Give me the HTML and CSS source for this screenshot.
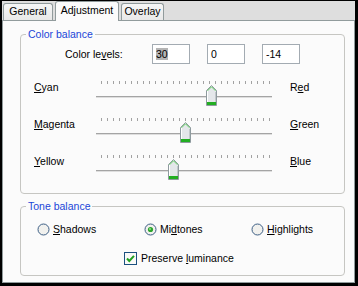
FILE: index.html
```html
<!DOCTYPE html>
<html lang="en">
<head>
    <meta charset="UTF-8">
    <title>Adjustment</title>
    <link rel="stylesheet" href="styles.css">
</head>
<body>
    <div class="window">
        <!-- tabs -->
        <div class="tabs">
            <div class="tab tab-general">General</div>
            <div class="tab tab-adjust active">Adjustment</div>
            <div class="tab tab-overlay">Overlay</div>
        </div>

        <div class="panel">
            <!-- color balance -->
            <fieldset class="group color-group">
                <legend>Color balance</legend>
                <div class="levels">
                    <span class="levels-label">Color le<u>v</u>els:</span>
                    <div class="field"><span class="sel">30</span></div>
                    <div class="field">0</div>
                    <div class="field">-14</div>
                </div>

                <div class="sliders">
                    <div class="slider-row">
                        <span class="lbl"><u>C</u>yan</span>
                        <div class="slider">
                            <div class="ticks"></div>
                            <div class="track"></div>
                            <svg class="thumb" style="left:110px" width="11" height="21" viewBox="0 0 11 21">
                                <path d="M5.5 0.5 L10.5 5.5 V20.5 H0.5 V5.5 Z" fill="#e4e7ea" stroke="#8e9a9e"/>
                                <path d="M1.5 5.8 L5.5 1.8 L9.5 5.8" fill="none" stroke="#63cf63"/>
                                <path d="M1.5 6 V17" stroke="#fff"/>
                                <path d="M9.5 7 V17" stroke="#c2c7cb"/>
                                <rect x="1" y="17" width="9" height="3" fill="#22ae22"/>
                            </svg>
                        </div>
                        <span class="lbl right">R<u>e</u>d</span>
                    </div>

                    <div class="slider-row">
                        <span class="lbl"><u>M</u>agenta</span>
                        <div class="slider">
                            <div class="ticks"></div>
                            <div class="track"></div>
                            <svg class="thumb" style="left:84px" width="11" height="21" viewBox="0 0 11 21">
                                <path d="M5.5 0.5 L10.5 5.5 V20.5 H0.5 V5.5 Z" fill="#e4e7ea" stroke="#8e9a9e"/>
                                <path d="M1.5 5.8 L5.5 1.8 L9.5 5.8" fill="none" stroke="#63cf63"/>
                                <path d="M1.5 6 V17" stroke="#fff"/>
                                <path d="M9.5 7 V17" stroke="#c2c7cb"/>
                                <rect x="1" y="17" width="9" height="3" fill="#22ae22"/>
                            </svg>
                        </div>
                        <span class="lbl right"><u>G</u>reen</span>
                    </div>

                    <div class="slider-row">
                        <span class="lbl"><u>Y</u>ellow</span>
                        <div class="slider">
                            <div class="ticks"></div>
                            <div class="track"></div>
                            <svg class="thumb" style="left:72px" width="11" height="21" viewBox="0 0 11 21">
                                <path d="M5.5 0.5 L10.5 5.5 V20.5 H0.5 V5.5 Z" fill="#e4e7ea" stroke="#8e9a9e"/>
                                <path d="M1.5 5.8 L5.5 1.8 L9.5 5.8" fill="none" stroke="#63cf63"/>
                                <path d="M1.5 6 V17" stroke="#fff"/>
                                <path d="M9.5 7 V17" stroke="#c2c7cb"/>
                                <rect x="1" y="17" width="9" height="3" fill="#22ae22"/>
                            </svg>
                        </div>
                        <span class="lbl right"><u>B</u>lue</span>
                    </div>
                </div>
            </fieldset>

            <!-- tone balance -->
            <fieldset class="group tone-group">
                <legend>Tone balance</legend>
                <div class="radios">
                    <div class="opt">
                        <svg width="13" height="13" viewBox="0 0 13 13">
                            <circle cx="6.5" cy="6.5" r="5.5" fill="#f1f1ee" stroke="#3d5f85"/>
                        </svg>
                        <span><u>S</u>hadows</span>
                    </div>
                    <div class="opt">
                        <svg width="13" height="13" viewBox="0 0 13 13">
                            <circle cx="6.5" cy="6.5" r="5.5" fill="#f1f1ee" stroke="#3d5f85"/>
                            <circle cx="6.5" cy="6.5" r="2.6" fill="#2ca52c"/>
                            <circle cx="6" cy="6" r="1" fill="#8ee08e"/>
                        </svg>
                        <span>Mi<u>d</u>tones</span>
                    </div>
                    <div class="opt">
                        <svg width="13" height="13" viewBox="0 0 13 13">
                            <circle cx="6.5" cy="6.5" r="5.5" fill="#f1f1ee" stroke="#3d5f85"/>
                        </svg>
                        <span><u>H</u>ighlights</span>
                    </div>
                </div>
                <div class="check">
                    <svg width="13" height="13" viewBox="0 0 13 13">
                        <rect x="0.5" y="0.5" width="12" height="12" fill="#fafaf8" stroke="#1c5180"/>
                        <path d="M3 6.5 L5.3 9 L10 3.8" fill="none" stroke="#21a121" stroke-width="2"/>
                    </svg>
                    <span>Preserve <u>l</u>uminance</span>
                </div>
            </fieldset>
        </div>
    </div>
</body>
</html>
```

FILE: styles.css
```css
body {
    margin: 0;
    background-color: #000;
    font-family: "Liberation Sans", Arial, sans-serif;
    font-size: 10.5px;
    color: #000;
}

/* window */
.window {
    margin: 1px 0 0 2px;
    width: 353px;
    height: 282px;
    background-color: #dedede;
    display: flex;
    flex-direction: column;
}

/* tabs */
.tabs {
    height: 19px;
    display: flex;
    align-items: flex-end;
    position: relative;
    z-index: 1;
}

.tab {
    box-sizing: border-box;
    height: 17px;
    line-height: 15px;
    text-align: center;
    border: 1px solid #919b9c;
    border-bottom: none;
    border-radius: 3px 3px 0 0;
    background: linear-gradient(#f6f6f6, #e8e8e8);
}

.tab-general {
    width: 50px;
    margin-left: 1px;
}

.tab-adjust {
    width: 64px;
    margin-left: 2px;
}

.tab-overlay {
    width: 43px;
    margin-left: 2px;
}

.tab.active {
    height: 20px;
    line-height: 17px;
    margin-bottom: -1px;
    background: #fbfbfb;
}

/* panel */
.panel {
    flex: 1;
    border: 1px solid #919b9c;
    background-color: #fbfbfb;
}

.group {
    box-sizing: border-box;
    width: 325px;
    min-width: 0;
    margin: 0 0 0 17px;
    padding: 0;
    border: 1px solid #c6c6c2;
    border-radius: 4px;
}

.group legend {
    margin-left: 5px;
    padding: 0 2px;
    line-height: 13px;
    color: #2146d8;
}

.color-group {
    margin-top: 7px;
    padding-bottom: 1px;
}

.tone-group {
    margin-top: 6px;
    padding-bottom: 10px;
}

/* color levels */
.levels {
    display: flex;
    align-items: center;
    margin-top: 3px;
    padding-left: 44px;
}

.levels-label {
    width: 87px;
}

.field {
    box-sizing: border-box;
    width: 38px;
    height: 20px;
    margin-right: 17px;
    padding-left: 3px;
    line-height: 18px;
    border: 1px solid #a3abb2;
    background-color: #fff;
}

.sel {
    background-color: #b4b4b4;
}

/* sliders */
.sliders {
    margin-top: 17px;
}

.slider-row {
    display: grid;
    grid-template-columns: 62px 176px auto;
    height: 37px;
    padding-left: 13px;
}

.lbl {
    line-height: 13px;
}

.lbl.right {
    margin-left: 18px;
}

.slider {
    position: relative;
    height: 26px;
}

.ticks {
    margin-left: 5px;
    width: 170px;
    height: 3px;
    background: repeating-linear-gradient(to right, #a2a2a2 0 1px, transparent 1px 6px);
}

.track {
    margin-top: 12px;
    height: 1px;
    background-color: #a4a4a4;
    border-bottom: 1px solid #dedede;
}

.thumb {
    position: absolute;
    top: 4px;
}

/* tone balance */
.radios {
    display: grid;
    grid-template-columns: 107px 107px auto;
    margin-top: 10px;
    padding-left: 16px;
}

.opt,
.check {
    display: flex;
    align-items: center;
    gap: 3px;
    line-height: 13px;
}

.check {
    margin-top: 16px;
    padding-left: 103px;
    gap: 4px;
}
```
